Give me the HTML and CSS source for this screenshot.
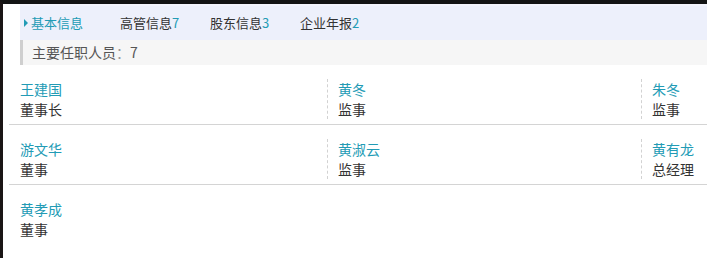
FILE: index.html
```html
<!DOCTYPE html>
<html lang="zh-CN">
<head>
    <meta charset="UTF-8">
    <meta name="viewport" content="width=device-width, initial-scale=1.0">
    <title>主要任职人员</title>
    <link rel="stylesheet" href="styles.css">
</head>
<body>
    <div class="frame">
        <ul class="tabs">
            <li class="tab active"><span class="arrow"></span>基本信息</li>
            <li class="tab">高管信息<span class="num">7</span></li>
            <li class="tab">股东信息<span class="num">3</span></li>
            <li class="tab">企业年报<span class="num">2</span></li>
        </ul>
        <div class="subhead">主要任职人员<span class="colon">：</span>7</div>

        <div class="staff">
            <div class="cell"><div class="inner"><a class="name">王建国</a><p class="role">董事长</p></div></div>
            <div class="cell"><div class="inner"><a class="name">黄冬</a><p class="role">监事</p></div></div>
            <div class="cell"><div class="inner"><a class="name">朱冬</a><p class="role">监事</p></div></div>

            <div class="cell"><div class="inner"><a class="name">游文华</a><p class="role">董事</p></div></div>
            <div class="cell"><div class="inner"><a class="name">黄淑云</a><p class="role">监事</p></div></div>
            <div class="cell"><div class="inner"><a class="name">黄有龙</a><p class="role">总经理</p></div></div>

            <div class="cell last"><div class="inner"><a class="name">黄孝成</a><p class="role">董事</p></div></div>
        </div>
    </div>
</body>
</html>
```

FILE: styles.css
```css
body {
    margin: 0;
    background-color: #fff;
    font-family: "Noto Sans CJK SC", "Liberation Sans", sans-serif;
    color: #333;
    overflow: hidden;
}
.frame {
    border-top: 4px solid #131414;
    border-left: 3px solid #1a1515;
    min-height: 100vh;
    box-sizing: border-box;
    overflow: hidden;
}
.tabs {
    list-style: none;
    margin: 0 0 0 17px;
    padding: 0 0 0 4px;
    height: 36px;
    display: flex;
    align-items: center;
    background-color: #edf0fb;
    border-top: 2px solid #f3f4fc;
    box-sizing: border-box;
    font-size: 13px;
    line-height: 20px;
}
.tab {
    width: 90px;
    color: #333;
    display: flex;
    align-items: center;
}
.tab.active {
    width: 96px;
    color: #229bb5;
}
.arrow {
    width: 0;
    height: 0;
    border-left: 4px solid #229bb5;
    border-top: 4px solid transparent;
    border-bottom: 4px solid transparent;
    margin-right: 3px;
}
.num {
    color: #229bb5;
}
.subhead {
    margin-left: 17px;
    height: 25px;
    line-height: 25px;
    background-color: #f6f6f6;
    border-left: 3px solid #cfcfcf;
    padding-left: 9px;
    font-size: 14px;
    color: #555;
}
.colon {
    color: #999;
}
.staff {
    margin-left: 6px;
    display: grid;
    grid-template-columns: 318px 314px 1fr;
}
.cell {
    padding: 14px 0 5px 0;
    border-bottom: 1px solid #d4d4d4;
}
.cell.last {
    border-bottom: none;
}
.inner {
    padding-left: 11px;
    font-size: 14px;
    line-height: 20px;
}
.cell + .cell .inner {
    border-left: 1px dashed #d2d2d2;
    padding-left: 10px;
}
.cell:nth-child(3n+1) .inner {
    border-left: none;
    padding-left: 11px;
}
.name {
    display: block;
    color: #229bb5;
    text-decoration: none;
}
.role {
    margin: 0;
    color: #333;
}
```
